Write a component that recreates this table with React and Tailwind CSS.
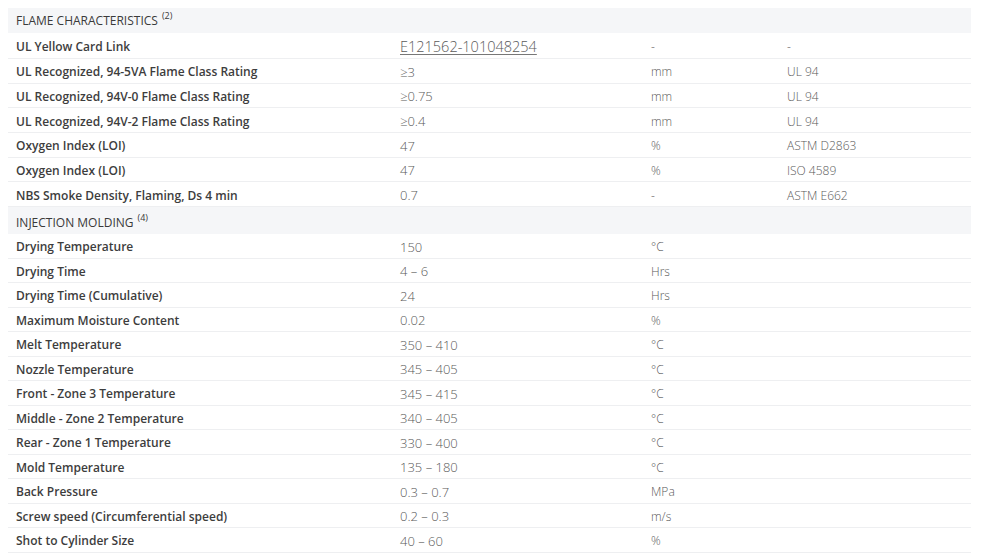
const flame = [
  ["UL Yellow Card Link", "E121562-101048254", "-", "-", true],
  ["UL Recognized, 94-5VA Flame Class Rating", "≥3", "mm", "UL 94"],
  ["UL Recognized, 94V-0 Flame Class Rating", "≥0.75", "mm", "UL 94"],
  ["UL Recognized, 94V-2 Flame Class Rating", "≥0.4", "mm", "UL 94"],
  ["Oxygen Index (LOI)", "47", "%", "ASTM D2863"],
  ["Oxygen Index (LOI)", "47", "%", "ISO 4589"],
  ["NBS Smoke Density, Flaming, Ds 4 min", "0.7", "-", "ASTM E662"],
];

const molding = [
  ["Drying Temperature", "150", "°C", ""],
  ["Drying Time", "4 – 6", "Hrs", ""],
  ["Drying Time (Cumulative)", "24", "Hrs", ""],
  ["Maximum Moisture Content", "0.02", "%", ""],
  ["Melt Temperature", "350 – 410", "°C", ""],
  ["Nozzle Temperature", "345 – 405", "°C", ""],
  ["Front - Zone 3 Temperature", "345 – 415", "°C", ""],
  ["Middle - Zone 2 Temperature", "340 – 405", "°C", ""],
  ["Rear - Zone 1 Temperature", "330 – 400", "°C", ""],
  ["Mold Temperature", "135 – 180", "°C", ""],
  ["Back Pressure", "0.3 – 0.7", "MPa", ""],
  ["Screw speed (Circumferential speed)", "0.2 – 0.3", "m/s", ""],
  ["Shot to Cylinder Size", "40 – 60", "%", ""],
];

function Header({ title, note, h }) {
  return (
    <div className={`flex items-center bg-[#f5f6f8] pl-[8px] text-[12px] text-[#3a3a3a] uppercase ${h}`}>
      <span>{title}</span>
      <sup className="ml-[4px] text-[9px] -top-[5px]">{note}</sup>
    </div>
  );
}

function Row({ label, value, unit, std, link, h }) {
  return (
    <div className={`flex items-center border-b border-[#eeeff1] pt-[3px] text-[12px] ${h}`}>
      <div className="w-[392px] pl-[8px] font-semibold text-[#3d3d3d]">{label}</div>
      <div className="w-[251px] font-light text-[13px] text-[#5a5a5a]">
        {link ? (
          <span className="text-[14.5px] underline underline-offset-2 decoration-[#777]">{value}</span>
        ) : (
          value
        )}
      </div>
      <div className="w-[136px] font-light text-[12px] text-[#5a5a5a]">{unit}</div>
      <div className="flex-1 font-light text-[12px] text-[#5a5a5a]">{std}</div>
    </div>
  );
}

export default function App() {
  return (
    <div className="bg-white w-[985px] h-[557px] overflow-hidden pt-[8px] pl-[8px] pr-[14px] font-['Open_Sans',sans-serif]">
      <Header title="Flame Characteristics" note="(2)" h="h-[25px] pt-[1px]" />
      {flame.map((r, i) => (
        <Row
          key={i}
          label={r[0]}
          value={r[1]}
          unit={r[2]}
          std={r[3]}
          link={r[4]}
          h={i === 0 ? "h-[26px]" : "h-[24.7px]"}
        />
      ))}
      <Header title="Injection Molding" note="(4)" h="h-[27px] pt-[4px]" />
      {molding.map((r, i) => (
        <Row key={i} label={r[0]} value={r[1]} unit={r[2]} std={r[3]} h="h-[24.5px]" />
      ))}
    </div>
  );
}
